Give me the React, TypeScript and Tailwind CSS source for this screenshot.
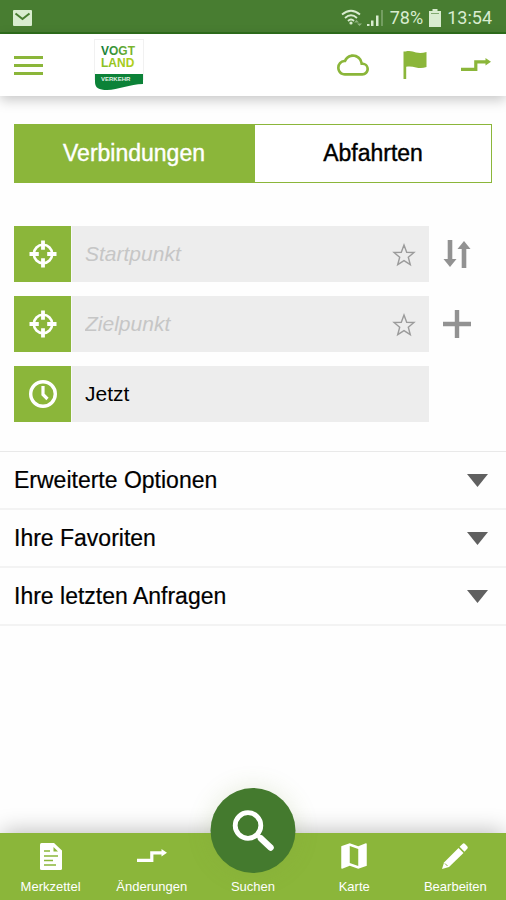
import type { ReactNode } from "react";
import { MdMap, MdOutlineCloud } from "react-icons/md";

function RouteIcon() {
  return (
    <svg viewBox="0 0 30 14" width="30" height="14" aria-hidden="true">
      <path d="M0 11.3H14.8V3.8H26" fill="none" stroke="currentColor" strokeWidth="3.2" />
      <path d="M24.5 0L30 3.8L24.5 7.6Z" fill="currentColor" />
    </svg>
  );
}

function FlagIcon() {
  return (
    <svg viewBox="0 0 24 28" width="24" height="28" aria-hidden="true">
      <path
        d="M0.5 0.5H2.5C7 -0.6 10 0.6 13 1.4C16.5 2.2 19.5 2 23.5 1V16C20 17.3 16.5 17.3 13 16.4C9.5 15.5 6.500 15 3.2 15.8V28H0.5Z"
        fill="currentColor"
      />
    </svg>
  );
}

function CrosshairIcon() {
  return (
    <svg viewBox="0 0 28 28" width="28" height="28" fill="none" stroke="currentColor" aria-hidden="true">
      <circle cx="14" cy="14" r="9.2" strokeWidth="2.6" />
      <path d="M14 0.5V9.8M14 18.2V27.5M0.5 14H9.8M18.2 14H27.5" strokeWidth="3.8" />
    </svg>
  );
}

function ClockIcon() {
  return (
    <svg viewBox="0 0 28 28" width="28" height="28" fill="none" stroke="currentColor" aria-hidden="true">
      <circle cx="14" cy="14" r="12.3" strokeWidth="3.4" />
      <path d="M14 6V14.5L18.5 19" strokeWidth="3.2" />
    </svg>
  );
}

function StarIcon() {
  return (
    <svg viewBox="0 0 24 24" width="24" height="24" aria-hidden="true">
      <path
        d="M12 2L14.7 9.2L22 9.5L16.3 14.3L18.3 21.7L12 17.6L5.7 21.7L7.7 14.3L2 9.5L9.3 9.2Z"
        fill="none"
        stroke="currentColor"
        strokeWidth="1.4"
      />
    </svg>
  );
}

function SwapIcon() {
  return (
    <svg viewBox="0 0 28 30" width="28" height="30" aria-hidden="true">
      <path d="M4.700 1H9.300V20H13.500L7 28L0.500 20H4.700Z" fill="currentColor" />
      <path d="M18.700 29V10H14.500L21 2L27.500 10H23.300V29Z" fill="currentColor" />
    </svg>
  );
}

function PlusIcon() {
  return (
    <svg viewBox="0 0 28 28" width="28" height="28" aria-hidden="true">
      <path d="M14 0V28M0 14H28" stroke="currentColor" strokeWidth="4.4" />
    </svg>
  );
}

function NoteIcon() {
  return (
    <svg viewBox="0 0 22 27" width="22" height="27" aria-hidden="true">
      <path d="M1.5 0H14L22 7.5V25.5Q22 27 20.5 27H1.5Q0 27 0 25.5V1.5Q0 0 1.5 0Z" fill="currentColor" />
      <path d="M13.5 4L18 8.500H13.500Z" fill="#8bb63a" />
      <path d="M4 8H10M4 13H18M4 17.5H13M4 22H16" stroke="#8bb63a" strokeWidth="1.3" />
    </svg>
  );
}

function PencilIcon() {
  return (
    <svg viewBox="0 0 26 26" width="26" height="26" aria-hidden="true">
      <path d="M0 26L2 19.5L16.5 5L21.5 10L7 24Z" fill="currentColor" />
      <path d="M17.6 3.8L20.5 0.9Q21.8 -0.2 23 1L25.2 3.2Q26.3 4.5 25.2 5.8L22.5 8.8Z" fill="currentColor" />
      <path d="M3 20.500L5.500 23" stroke="#8bb63a" strokeWidth="1" />
    </svg>
  );
}

function SearchIcon() {
  return (
    <svg viewBox="0 0 85 85" width="85" height="85" fill="none" stroke="currentColor" aria-hidden="true">
      <circle cx="37.5" cy="37.5" r="12.8" strokeWidth="4.8" />
      <path d="M46 46L50 50" strokeWidth="4.5" />
      <path d="M50.5 50.5L60 59.5" strokeWidth="6.5" strokeLinecap="round" />
    </svg>
  );
}

function Logo() {
  return (
    <svg viewBox="0 0 50 52" width="50" height="52" role="img" aria-label="Vogtland Verkehr">
      <defs>
        <linearGradient id="vogt" x1="0" x2="1" y1="0" y2="0">
          <stop offset="0" stopColor="#0f7a38" />
          <stop offset="0.5" stopColor="#4d9f38" />
          <stop offset="1" stopColor="#86bb2c" />
        </linearGradient>
        <linearGradient id="land" x1="0" x2="1" y1="0" y2="0">
          <stop offset="0" stopColor="#86bf24" />
          <stop offset="1" stopColor="#b2cf1c" />
        </linearGradient>
      </defs>
      <rect x="0.5" y="0.5" width="49" height="40" fill="#fff" stroke="#f1f1f1" />
      <path d="M1 35H49V45C36 45 24 51 13 51C5 51 1 49 1 43Z" fill="#0c8238" />
      <g fontFamily="'Liberation Sans', Arial, sans-serif" fontWeight="700">
        <text x="7" y="16" fontSize="12" fill="url(#vogt)">VOGT</text>
        <text x="7" y="28" fontSize="12" fill="url(#land)">LAND</text>
        <text x="7" y="42" fontSize="6" fill="#e3f3e4">VERKEHR</text>
      </g>
    </svg>
  );
}

function StatusBar() {
  return (
    <div className="flex h-[34px] items-center justify-between border-b-2 border-[#2f6f1c] bg-[#487d31] pt-1 pr-3.5 pl-[13px] text-[#d9ecd0]">
      <svg viewBox="0 0 19 16" width="19" height="16" aria-label="Neue Nachricht" role="img">
        <rect width="19" height="16" rx="1" fill="currentColor" />
        <path d="M2.5 3.5L9.5 9L16.5 3.5" fill="none" stroke="#487d31" strokeWidth="2" />
      </svg>
      <div className="flex items-center gap-1.5 font-['Roboto',sans-serif] text-lg leading-none">
        <svg viewBox="0 0 43 18" width="43" height="18" aria-hidden="true">
          <g fill="none" stroke="currentColor" strokeWidth="1.8">
            <path d="M1 5.5Q10 -2 19 5.5" />
            <path d="M4 9Q10 3.5 16 9" />
            <path d="M7 12Q10 9 13 12" />
          </g>
          <circle cx="10" cy="14" r="1.6" fill="currentColor" />
          <path d="M13 13.5L15.5 11L18 13.5ZM16 14.5H21L18.5 17Z" fill="currentColor" opacity="0.5" />
          <path d="M26 17V15H28.5V17ZM30 17V11.5H32.5V17ZM35 17V6.5H37.5V17Z" fill="currentColor" />
          <path d="M40 17V1H42V17Z" fill="currentColor" opacity="0.3" />
        </svg>
        <span>78%</span>
        <svg viewBox="0 0 12 18" width="12" height="18" aria-hidden="true">
          <path d="M3.5 0H8.5V2H12V18H0V2H3.5Z" fill="currentColor" />
          <path d="M2 4.5H10" stroke="#487d31" strokeWidth="1" opacity="0.6" />
        </svg>
        <span>13:54</span>
      </div>
    </div>
  );
}

function Header() {
  return (
    <header className="z-10 flex h-[62px] items-center justify-between bg-white pr-[15px] pl-3.5 text-[#8bb63a] shadow-[0_4px_12px_rgba(0,0,0,0.22)]">
      <div className="flex items-center gap-[51px]">
        <button type="button" aria-label="Menü" className="flex w-[29px] flex-col gap-[5px]">
          <span className="h-[3px] bg-[#8bb63a]" />
          <span className="h-[3px] bg-[#8bb63a]" />
          <span className="h-[3px] bg-[#8bb63a]" />
        </button>
        <Logo />
      </div>
      <div className="flex items-center gap-[34px]">
        <button type="button" aria-label="Wetter"><MdOutlineCloud size={32} /></button>
        <button type="button" aria-label="Meldungen"><FlagIcon /></button>
        <button type="button" aria-label="Änderungen"><RouteIcon /></button>
      </div>
    </header>
  );
}

interface FieldRowProps {
  id: string;
  label: string;
  icon: ReactNode;
  value?: string;
  favorite?: boolean;
  action?: ReactNode;
  actionLabel?: string;
}

function FieldRow({ id, label, icon, value, favorite, action, actionLabel }: FieldRowProps) {
  return (
    <div className="grid grid-cols-[1fr_56px] items-center">
      <div className="flex h-14 bg-[#ededed]">
        <label
          htmlFor={id}
          aria-label={label}
          className="grid w-[58px] shrink-0 place-items-center border-r border-[#f8f8f8] bg-[#8bb63a] text-white"
        >
          {icon}
        </label>
        <input
          id={id}
          type="text"
          defaultValue={value}
          placeholder={value ? undefined : label}
          className="min-w-0 flex-1 bg-transparent px-[13px] text-[21px] text-black outline-none placeholder:text-[#c6c6c6] placeholder:italic"
        />
        {favorite && (
          <button type="button" aria-label={`${label} aus Favoriten`} className="mt-0.5 shrink-0 px-[13px] text-[#9b9b9b]">
            <StarIcon />
          </button>
        )}
      </div>
      {action && (
        <button type="button" aria-label={actionLabel} className="grid place-items-center text-[#929292]">
          {action}
        </button>
      )}
    </div>
  );
}

const sections = ["Erweiterte Optionen", "Ihre Favoriten", "Ihre letzten Anfragen"];

function NavItem({ label, children }: { label: string; children?: ReactNode }) {
  return (
    <button type="button" className="flex min-w-0 flex-col items-center text-white">
      <span className="grid h-[46px] place-items-center">{children}</span>
      <span className="text-[13px] leading-4">{label}</span>
    </button>
  );
}

export default function App() {
  return (
    <div className="flex min-h-screen flex-col bg-[#fefefe] font-['Liberation_Sans',Arial,sans-serif] text-black">
      <StatusBar />
      <Header />
      <main className="flex-1">
        <div className="mx-3.5 mt-7 grid h-[59px] grid-cols-2 border border-[#8bb63a] text-[23px]">
          <button type="button" className="bg-[#8bb63a] text-white [-webkit-text-stroke:0.4px_white]">Verbindungen</button>
          <button type="button" className="border-l-2 border-[#8bb63a] bg-white [-webkit-text-stroke:0.4px_black]">Abfahrten</button>
        </div>
        <form className="mt-[43px] mr-[21px] ml-3.5 flex flex-col gap-3.5">
          <FieldRow id="start" label="Startpunkt" icon={<CrosshairIcon />} favorite action={<SwapIcon />} actionLabel="Start und Ziel tauschen" />
          <FieldRow id="ziel" label="Zielpunkt" icon={<CrosshairIcon />} favorite action={<PlusIcon />} actionLabel="Zwischenhalt hinzufügen" />
          <FieldRow id="zeit" label="Zeit" icon={<ClockIcon />} value="Jetzt" />
        </form>
        <div className="mt-[29px] border-t border-[#e9e9e9]">
          {sections.map((title) => (
            <button
              key={title}
              type="button"
              aria-expanded="false"
              className="flex min-h-[58px] w-full items-center justify-between border-b-2 border-[#f3f3f3] pr-[18px] pl-3.5 text-left text-[23px] leading-7 [-webkit-text-stroke:0.2px_black]"
            >
              {title}
              <svg viewBox="0 0 21 13" width="21" height="13" aria-hidden="true">
                <path d="M0 0H21L10.5 13Z" fill="#606060" />
              </svg>
            </button>
          ))}
        </div>
      </main>
      <nav className="relative grid h-[67px] grid-cols-5 bg-[#8bb63a] shadow-[0_-4px_22px_-2px_rgba(0,0,0,0.26)]">
        <NavItem label="Merkzettel"><NoteIcon /></NavItem>
        <NavItem label="Änderungen"><RouteIcon /></NavItem>
        <NavItem label="Suchen">
          <span className="absolute bottom-[27px] left-1/2 size-[85px] -translate-x-1/2 rounded-full bg-[#447a2e] shadow-[0_0_24px_rgba(120,150,60,0.18)]">
            <SearchIcon />
          </span>
        </NavItem>
        <NavItem label="Karte"><MdMap size={34} /></NavItem>
        <NavItem label="Bearbeiten"><PencilIcon /></NavItem>
      </nav>
    </div>
  );
}
